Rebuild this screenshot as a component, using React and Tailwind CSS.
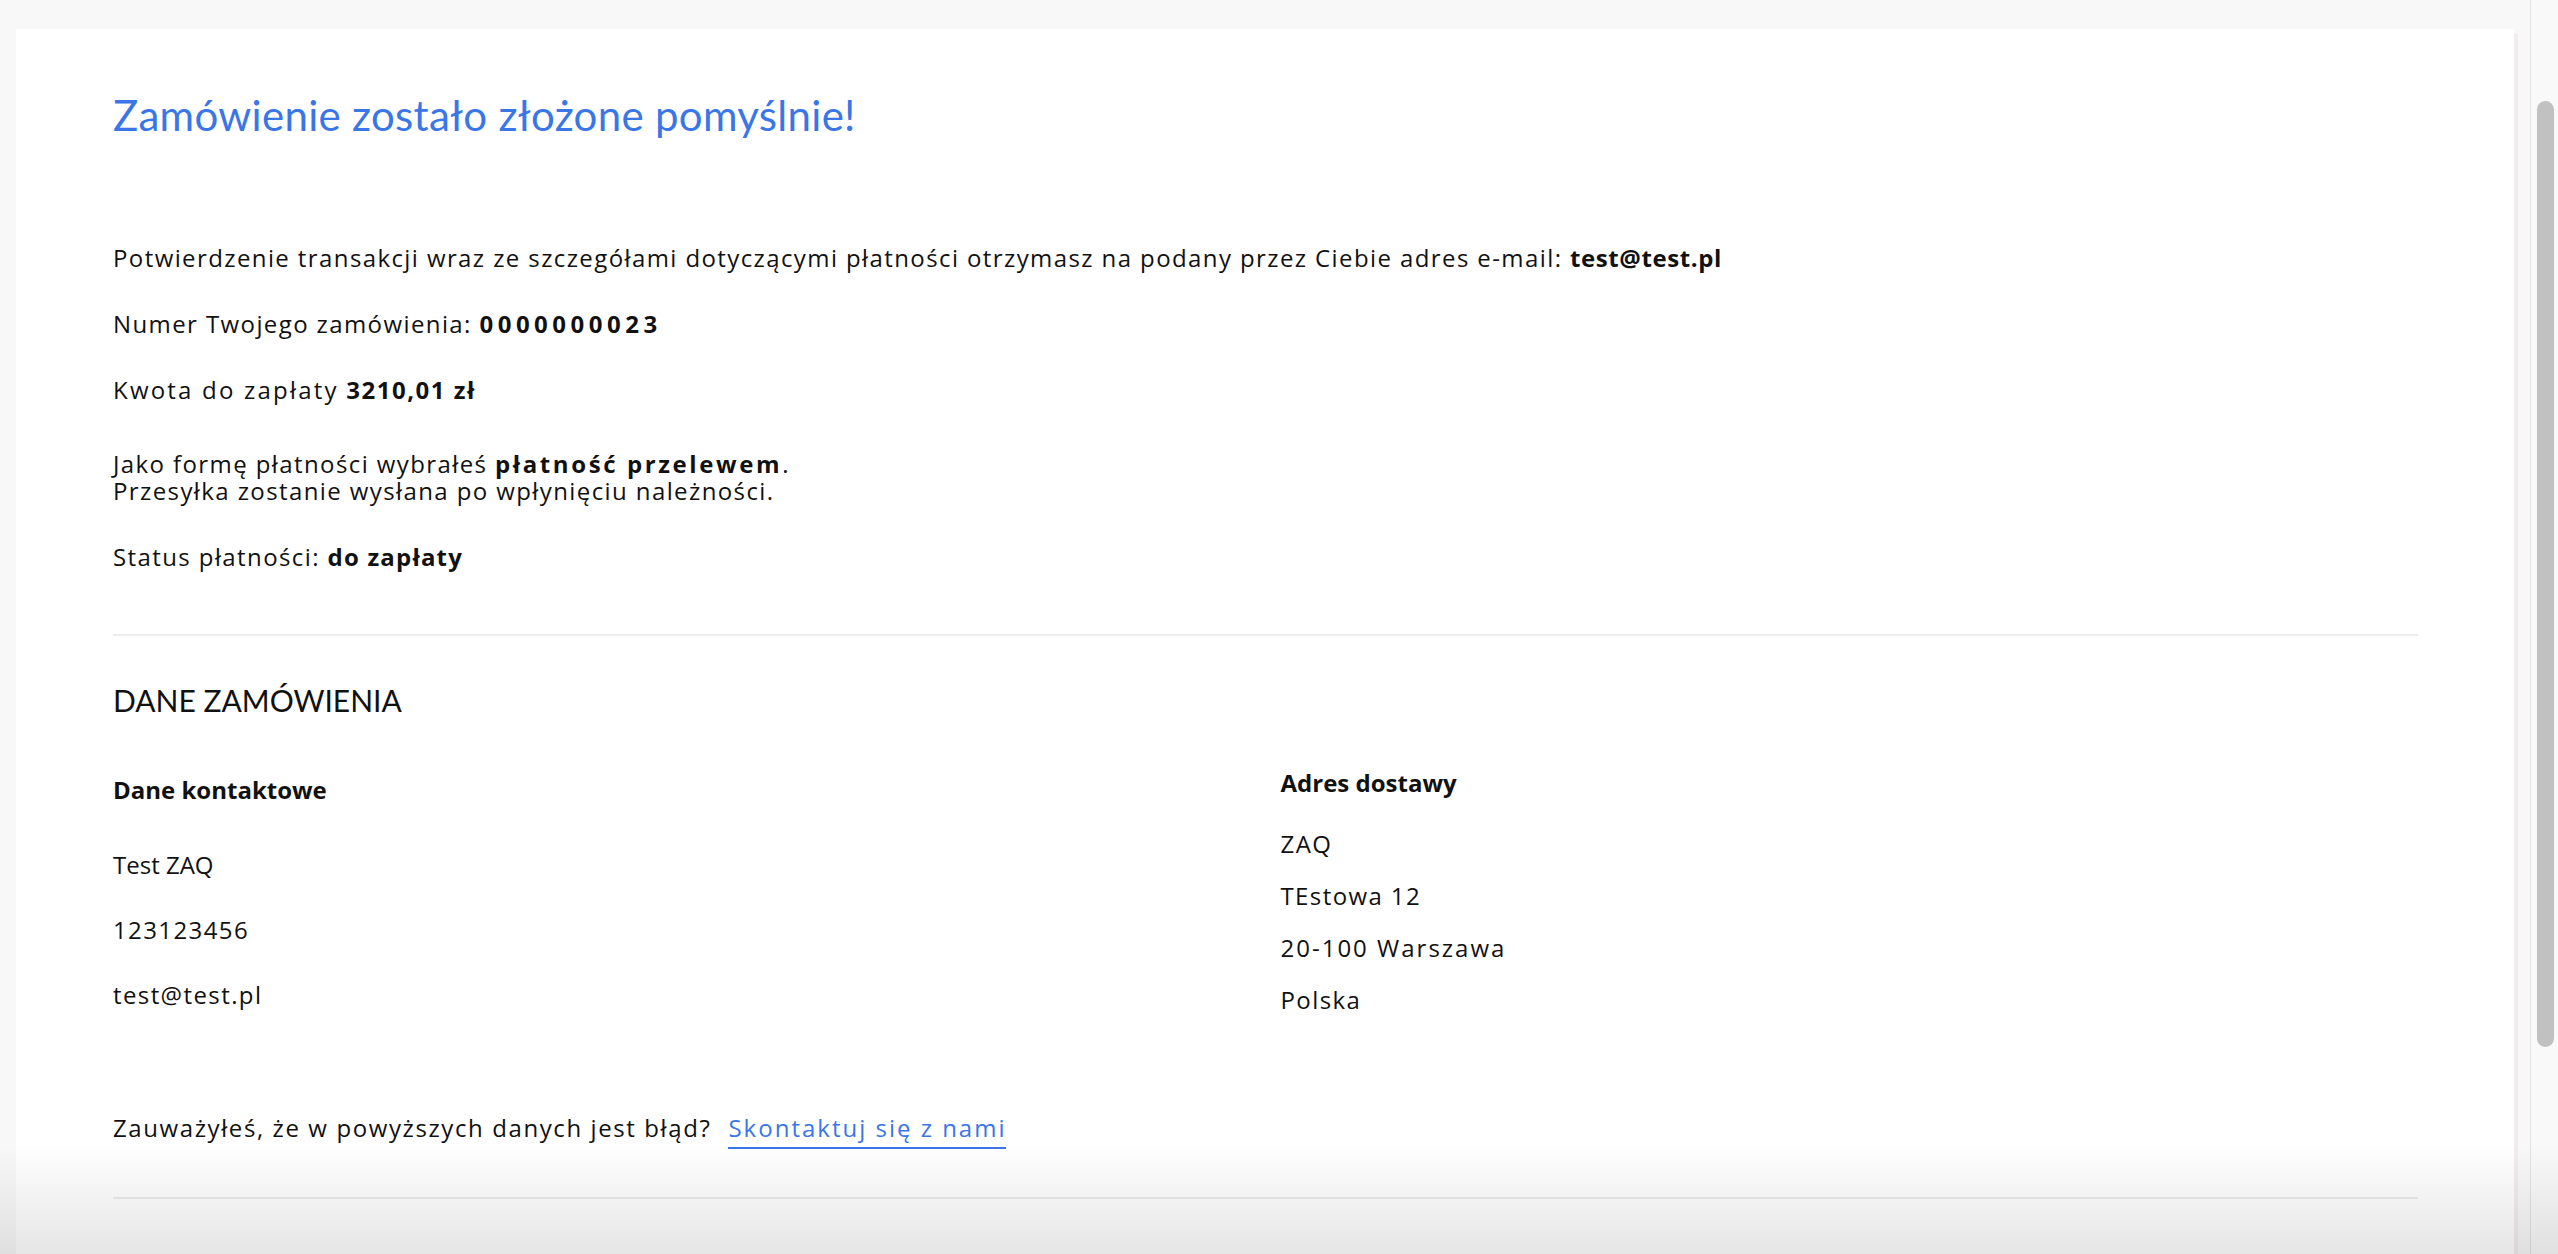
export default function App() {
  const heading = { fontFamily: "Lato, 'Open Sans', sans-serif" };
  const body = { fontFamily: "'Open Sans', Lato, sans-serif" };
  return (
    <div
      className="h-screen w-full overflow-hidden bg-[#f8f8f8] flex text-[#111111] relative"
      style={body}
    >
      <div className="flex-1 pl-[16px] pt-[29px] min-w-0">
        <div className="bg-white h-full pl-[97px] pr-[96px] pt-[61px]">
          <h1
            className="text-[42px] leading-[50px] text-[#3a76e8] font-normal tracking-[0.3px]"
            style={heading}
          >
            Zamówienie zostało złożone pomyślnie!
          </h1>

          <div className="mt-[104px] flex flex-col text-[24px] leading-[27px] tracking-[1.4px]">
            <p>
              Potwierdzenie transakcji wraz ze szczegółami dotyczącymi płatności
              otrzymasz na podany przez Ciebie adres e-mail:{" "}
              <b className="font-bold tracking-[0.6px]">test@test.pl</b>
            </p>
            <p className="mt-[39px]">
              Numer Twojego zamówienia:{" "}
              <b className="font-bold tracking-[4.5px]">0000000023</b>
            </p>
            <p className="mt-[39px]">
              <span className="tracking-[2.2px]">Kwota do zapłaty</span>{" "}
              <b className="font-bold tracking-[1.5px]">3210,01 zł</b>
            </p>
            <p className="mt-[47px]">
              Jako formę płatności wybrałeś{" "}
              <b className="font-bold tracking-[2.6px]">płatność przelewem</b>.
              <br />
              Przesyłka zostanie wysłana po wpłynięciu należności.
            </p>
            <p className="mt-[39px]">
              Status płatności:{" "}
              <b className="font-bold tracking-[1.2px]">do zapłaty</b>
            </p>
          </div>

          <div className="mt-[64px] h-[2px] bg-[#ececec]" />

          <h2
            className="mt-[46px] text-[30px] leading-[36px] font-normal"
            style={heading}
          >
            DANE ZAMÓWIENIA
          </h2>

          <div className="grid grid-cols-2 gap-x-[30px] mt-[58px] text-[24px] leading-[27px] tracking-[1.4px]">
            <div className="flex flex-col">
              <h3 className="font-bold tracking-normal">Dane kontaktowe</h3>
              <div className="mt-[48px] flex flex-col gap-[38px]">
                <p className="tracking-normal">Test ZAQ</p>
                <p>123123456</p>
                <p>test@test.pl</p>
              </div>
            </div>
            <div className="flex flex-col -mt-[7px]">
              <h3 className="font-bold tracking-normal">Adres dostawy</h3>
              <div className="mt-[34px] flex flex-col gap-[25px]">
                <p>ZAQ</p>
                <p>TEstowa 12</p>
                <p className="tracking-[2px]">20-100 Warszawa</p>
                <p>Polska</p>
              </div>
            </div>
          </div>

          <div className="mt-[101px] flex items-start text-[24px] leading-[27px]">
            <span className="tracking-[1.6px]">
              Zauważyłeś, że w powyższych danych jest błąd?
            </span>
            <a
              href="#"
              className="ml-[17px] text-[#3a76e8] border-b-2 border-[#3a76e8] pb-[6px] tracking-[2px]"
            >
              Skontaktuj się z nami
            </a>
          </div>

          <div className="mt-[48px] h-[2px] bg-[#ececec]" />

          <p className="mt-[52px] text-[24px] leading-[27px] tracking-[1.4px]">
            Dziękujemy za złożenie zamówienia w naszym sklepie internetowym.
          </p>
        </div>
      </div>

      <div className="w-[4px] mt-[34px] bg-[#f2eded]" />
      <div className="w-[12px]" />
      <div className="w-[1px] bg-[#e2e2e2]" />
      <div className="w-[27px] bg-[#f9f9f9] pt-[101px] pl-[6px] pr-[4px]">
        <div className="h-[946px] w-full rounded-full bg-[#c1c1c1]" />
      </div>

      <div className="pointer-events-none absolute left-0 right-0 bottom-0 h-[110px] bg-gradient-to-b from-transparent to-black/10" />
    </div>
  );
}
